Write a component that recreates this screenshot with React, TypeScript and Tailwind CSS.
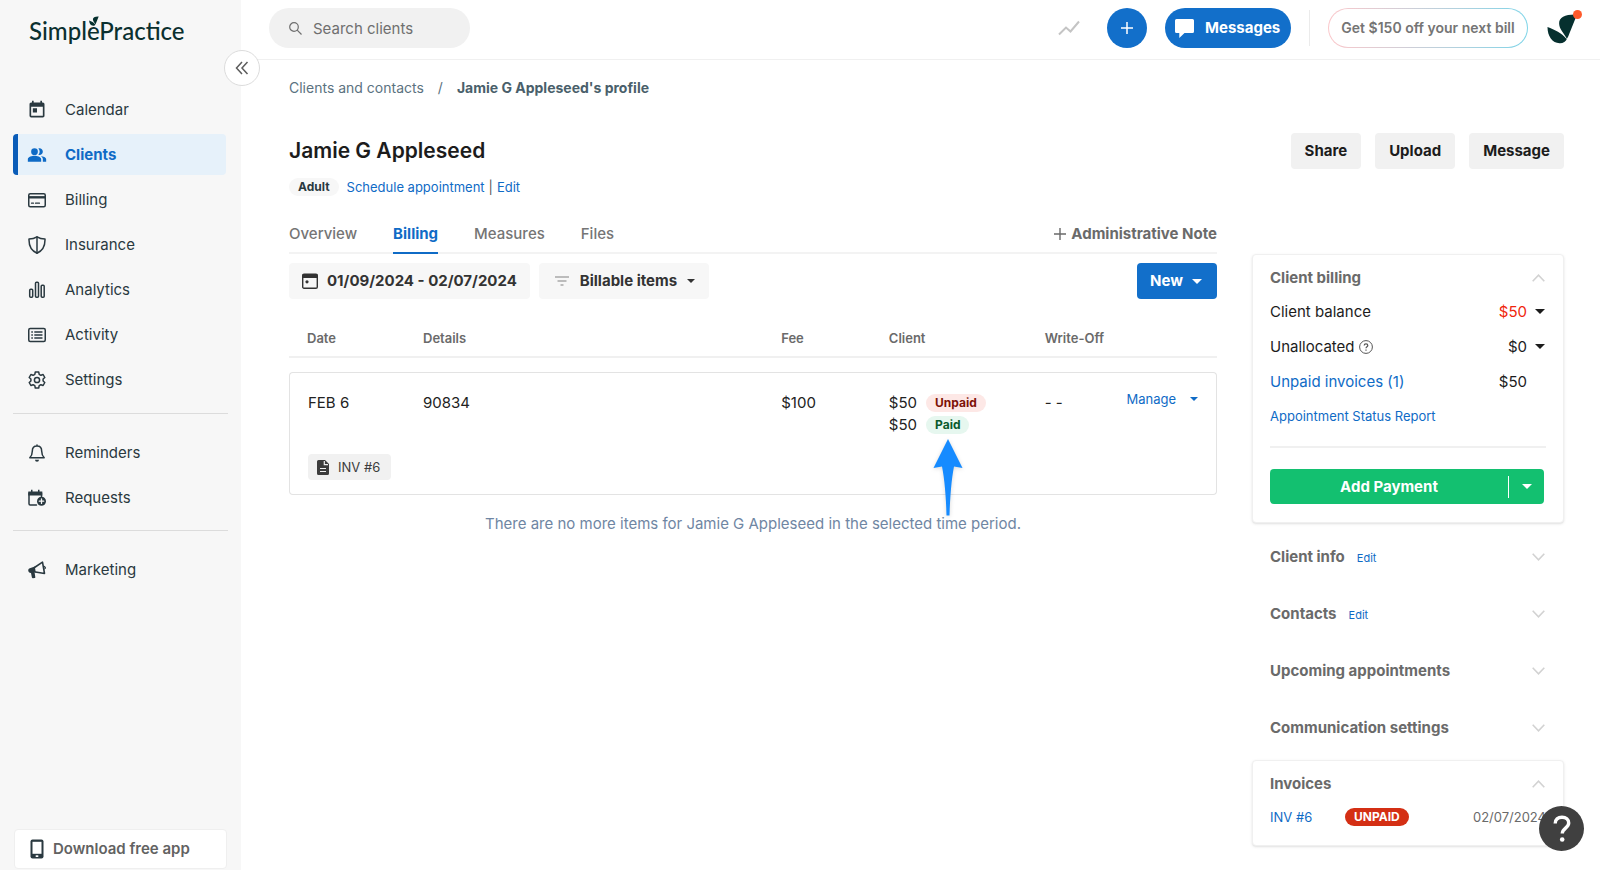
import type { ReactNode } from 'react';
import { useState } from 'react';
import { MdPeopleAlt, MdToday } from 'react-icons/md';

type NavItem = { label: string; icon: ReactNode };

function Glyph({ children }: { children: ReactNode }) {
  return (
    <svg viewBox="0 0 18 18" className="size-[18px]" fill="none" stroke="currentColor" strokeWidth="1.5" strokeLinejoin="round" strokeLinecap="round" aria-hidden="true">
      {children}
    </svg>
  );
}

const mainNav: NavItem[] = [
  { label: 'Calendar', icon: <MdToday className="size-5" /> },
  { label: 'Clients', icon: <MdPeopleAlt className="size-5" /> },
  {
    label: 'Billing',
    icon: (
      <Glyph>
        <rect x="0.75" y="2.75" width="16.5" height="13" rx="1.5" />
        <path d="M1 6.3h16" strokeWidth="2.4" strokeLinecap="butt" />
        <path d="M3.5 12.2h2M7.5 12.2h4" strokeWidth="1.2" />
      </Glyph>
    ),
  },
  {
    label: 'Insurance',
    icon: (
      <Glyph>
        <path d="M9 .8c2.3 1.5 5 2.2 8 2.2.2 6.5-1.6 11.500-8 14.200C2.600 14.500.8 9.500 1 3c3 0 5.700-.7 8-2.200z" />
        <path d="M9 1v16" />
      </Glyph>
    ),
  },
  {
    label: 'Analytics',
    icon: (
      <Glyph>
        <rect x="1.7" y="8.2" width="3" height="8" rx="1" />
        <rect x="7.5" y="1.2" width="3" height="15" rx="1" />
        <rect x="13.2" y="4.2" width="3" height="12" rx="1" />
      </Glyph>
    ),
  },
  {
    label: 'Activity',
    icon: (
      <Glyph>
        <rect x="0.75" y="2.5" width="16.5" height="13" rx="1.5" />
        <path d="M6.8 6h7.2M6.8 9h7.2M6.8 12h7.2M3.8 6h.6M3.8 9h.6M3.8 12h.6" strokeWidth="1.4" />
      </Glyph>
    ),
  },
  {
    label: 'Settings',
    icon: (
      <Glyph>
        <path d="M7.3 1h3.4l.5 2.300 1.700 1 2.200-.8 1.700 3-1.700 1.500v2l1.700 1.500-1.700 3-2.200-.8-1.700 1-.5 2.300H7.300l-.5-2.300-1.700-1-2.200.8-1.700-3L2.900 10V8L1.200 6.500l1.700-3 2.200.8 1.700-1z" />
        <circle cx="9" cy="9" r="2.6" />
      </Glyph>
    ),
  },
];

const requestNav: NavItem[] = [
  {
    label: 'Reminders',
    icon: (
      <Glyph>
        <path d="M9 2c-3 0-4.700 2.300-4.700 5.200 0 3.200-.8 4.800-2.500 6.500h14.400c-1.700-1.700-2.500-3.300-2.500-6.500C13.700 4.300 12 2 9 2zM9 1v1" />
        <path d="M7 15.700h4a2 2 0 0 1-4 0z" fill="currentColor" stroke="none" />
      </Glyph>
    ),
  },
  {
    label: 'Requests',
    icon: (
      <Glyph>
        <path d="M8.5 16H2.200a1.200 1.200 0 0 1-1.200-1.200V4h12.500v3.500" />
        <path d="M.3 2.500h14v4H.3zM3 .8h1.500v2H3zM10 .8h1.500v2H10z" fill="currentColor" stroke="none" />
        <circle cx="13.5" cy="12.2" r="4.5" fill="currentColor" stroke="none" />
        <path d="M13.500 10v4.400M11.300 12.200h4.400" stroke="#f7f7f7" strokeWidth="1.3" />
      </Glyph>
    ),
  },
];

const growthNav: NavItem[] = [
  {
    label: 'Marketing',
    icon: (
      <Glyph>
        <path d="M6.500 6.500 14.500 1.200 16.500 12.500 7.500 11" strokeWidth="1.6" />
        <path d="M6.800 5.500 1.800 7.200C.3 7.800 0 9 .4 10.200c.4 1.300 1.400 1.800 2.600 1.700l.9 4.600c.1.500.5.8 1 .8l1.700-.3c.6-.1.8-.6.7-1.100l-.7-4.400 1.200-.1z" fill="currentColor" stroke="none" />
        <path d="M16.300 5.200c1.500.2 1.700 2.200.4 3" fill="currentColor" strokeWidth="1" />
      </Glyph>
    ),
  },
];

function NavList({ items, active }: { items: NavItem[]; active?: string }) {
  return (
    <ul className="flex flex-col gap-1">
      {items.map((item) => {
        const isActive = item.label === active;
        return (
          <li key={item.label}>
            <a
              href="#"
              className={
                isActive
                  ? 'flex h-[41px] items-center rounded-sm border-l-[5px] border-[#0a5cb8] bg-[#e6f1fa] pl-[9px] font-bold text-[#0f6bc6]'
                  : 'flex h-[41px] items-center border-l-[5px] border-transparent pl-[9px] text-[#2a3940]'
              }
            >
              <span className="flex w-5 justify-center">{item.icon}</span>
              <span className="pl-[18px]">{item.label}</span>
            </a>
          </li>
        );
      })}
    </ul>
  );
}

function Caret({ className }: { className: string }) {
  return (
    <svg viewBox="0 0 10 5" className={className} fill="currentColor" aria-hidden="true">
      <path d="M0 0h10L5 5z" />
    </svg>
  );
}

function Chevron({ open }: { open?: boolean }) {
  return (
    <svg viewBox="0 0 13 8" className="h-2 w-[13px] text-[#d2d2d2]" fill="none" stroke="currentColor" strokeWidth="1.6" aria-hidden="true">
      <path d={open ? 'M.7 7.200 6.500 1.200 12.300 7.200' : 'M.7.8 6.500 6.800 12.300.8'} />
    </svg>
  );
}

function Leaf({ className }: { className: string }) {
  return (
    <svg viewBox="0 0 32 32" className={className} fill="#06302f" aria-hidden="true">
      <path d="M20.500 26.500C17 20 12.500 16.500 12.500 10.500 12.500 4.500 19 1 31 1.500L23 21.500C22 24 21.500 25.500 20.500 26.500z" />
      <path d="M.5 14.500C8 17.500 15.500 21 19.500 26c.5.7 1 .7 1.300 0C19.500 29.500 16.500 31.500 13 31.300 5.500 31 .5 24 .5 14.500z" />
    </svg>
  );
}

function Sidebar() {
  return (
    <aside className="relative flex w-[241px] shrink-0 flex-col bg-[#f7f7f7]">
      <a href="#" className="relative ml-[29px] mt-[13px] w-fit font-['Lato'] text-[24px] font-medium leading-9 text-[#0b302f]" aria-label="SimplePractice home">
        SimplePractice
        <Leaf className="absolute left-[60px] top-[3px] size-[10px]" />
      </a>
      <button
        type="button"
        aria-label="Collapse menu"
        className="absolute -right-[19px] top-[50px] z-10 flex size-9 items-center justify-center rounded-full border border-[#dcdcdc] bg-white text-[#5c5c5c]"
      >
        <svg viewBox="0 0 14 14" className="size-[14px]" fill="none" stroke="currentColor" strokeWidth="1.5" aria-hidden="true">
          <path d="M7 1 1.500 7 7 13M12.500 1 7 7 12.500 13" />
        </svg>
      </button>

      <nav className="mt-10 pl-[13px] pr-[15px]">
        <NavList items={mainNav} active="Clients" />
        <hr className="-mr-0.5 mb-[18px] mt-[13px] border-[#dcdcdc]" />
        <NavList items={requestNav} />
        <hr className="-mr-0.5 mb-[18px] mt-3 border-[#dcdcdc]" />
        <NavList items={growthNav} />
      </nav>

      <a href="#" className="mx-[14px] mb-px mt-auto flex h-[40px] items-center gap-[9px] rounded border border-[#efefef] bg-white pl-[15px] font-semibold text-[#626262]">
        <svg viewBox="0 0 14 20" className="h-5 w-[14px]" aria-hidden="true">
          <rect x="0.5" y="0.5" width="13" height="19" rx="2" fill="#2a3940" />
          <path d="M2.500 2.800h9v12h-9z" fill="#fff" />
          <path d="M5.700 16.300h2.600v1.700H5.700z" fill="#fff" />
        </svg>
        Download free app
      </a>
    </aside>
  );
}

function TopBar() {
  return (
    <header className="flex h-[60px] items-start border-b border-[#f0f0f0] pl-7 pr-[18px] pt-2">
      <label className="flex h-10 w-[201px] items-center gap-[11px] rounded-full bg-[#f1f1f1] pl-5 pr-4">
        <svg viewBox="0 0 13 13" className="size-[13px] shrink-0 text-[#6f6f6f]" fill="none" stroke="currentColor" strokeWidth="1.2" aria-hidden="true">
          <circle cx="5" cy="5" r="4.3" />
          <path d="m8.200 8.200 4.300 4.300" />
        </svg>
        <input
          type="text"
          aria-label="Search clients"
          placeholder="Search clients"
          className="h-10 min-w-0 flex-1 bg-transparent outline-none placeholder:text-[#6f6f6f]"
        />
      </label>

      <div className="ml-auto flex h-10 items-center">
        <svg viewBox="0 0 22 16" className="h-4 w-[22px] text-[#c4c4c4]" fill="none" stroke="currentColor" strokeWidth="2" aria-hidden="true">
          <path d="M1 14.500 8 7.500 12.500 11.500 21 1.500" />
        </svg>
        <button type="button" aria-label="Create" className="ml-[27px] flex size-10 items-center justify-center rounded-full bg-[#126fca] text-white">
          <svg viewBox="0 0 12 12" className="size-3" stroke="currentColor" strokeWidth="1.5" aria-hidden="true">
            <path d="M6 0v12M0 6h12" />
          </svg>
        </button>
        <button type="button" className="ml-[18px] flex h-10 w-[126px] items-center gap-[11px] rounded-full bg-[#126fca] pl-[10px] font-bold text-white">
          <svg viewBox="0 0 19 19" className="size-[19px]" fill="currentColor" aria-hidden="true">
            <path d="M1.500 0h16A1.500 1.500 0 0 1 19 1.500v11a1.500 1.500 0 0 1-1.500 1.500H9.500L4.300 19v-5H1.500A1.500 1.500 0 0 1 0 12.500v-11A1.500 1.500 0 0 1 1.500 0z" />
          </svg>
          Messages
        </button>
        <span className="ml-[18px] h-9 w-px bg-[#ebebeb]" />
        <button type="button" className="ml-[18px] h-10 w-[200px] rounded-full bg-linear-to-r from-[#fbc8cb] to-[#7dd4e8] p-px">
          <span className="flex h-full items-center justify-center rounded-full bg-white text-sm font-semibold text-[#757575]">
            Get $150 off your next bill
          </span>
        </button>
        <button type="button" aria-label="Account" className="relative ml-[19px] flex w-[35px] items-center">
          <Leaf className="size-[31px]" />
          <span className="absolute -top-[3px] right-0 size-[9px] rounded-full bg-[#ff5a2b]" />
        </button>
      </div>
    </header>
  );
}

const tabs = ['Overview', 'Billing', 'Measures', 'Files'];

function BillingTable() {
  return (
    <table className="mt-5 w-full table-fixed border-separate border-spacing-0 text-left text-[#222]">
      <colgroup>
        <col className="w-[12.5%]" />
        <col className="w-[38.6%]" />
        <col className="w-[11.6%]" />
        <col className="w-[16.8%]" />
        <col className="w-[8.5%]" />
        <col />
      </colgroup>
      <thead>
        <tr className="text-[13px] text-[#6a6a6a] [&>th]:h-[39px] [&>th]:border-b-2 [&>th]:border-[#f0f0f0] [&>th]:pl-[18px] [&>th]:font-semibold">
          <th>Date</th>
          <th>Details</th>
          <th>Fee</th>
          <th>Client</th>
          <th className="whitespace-nowrap">Write-Off</th>
          <th aria-label="Actions" />
        </tr>
      </thead>
      <tbody>
        <tr aria-hidden="true">
          <td colSpan={6} className="h-[14px]" />
        </tr>
        <tr className="[&>td]:border-t [&>td]:border-[#e3e3e3] [&>td]:pl-[18px] [&>td]:align-top [&>td:not(:last-child)]:pt-[19px]">
          <td className="rounded-tl border-l">FEB 6</td>
          <td>90834</td>
          <td>$100</td>
          <td className="relative">
            <div className="flex h-[22px] items-center gap-[9px]">
              $50
              <span className="flex h-[18px] items-center rounded-full bg-[#fde8e6] px-[9px] text-xs font-bold text-[#7d1208]">Unpaid</span>
            </div>
            <div className="flex h-[22px] items-center gap-[9px]">
              $50
              <span className="flex h-[18px] items-center rounded-full bg-[#e6f7ef] px-[9px] text-xs font-bold text-[#0a5a2c]">Paid</span>
            </div>
            <svg viewBox="0 0 30 77" className="absolute left-[62px] top-[66px] z-10 h-[77px] w-[30px] drop-shadow-sm" fill="#168bff" aria-hidden="true">
              <path d="M15 0 29.500 29 21 27.500C18.500 40 17 58 16.500 76.500h-3C13 58 11.500 40 9 27.500L.5 29z" />
            </svg>
          </td>
          <td>- -</td>
          <td className="rounded-tr border-r pr-[18px] pt-[15px] text-right">
            <button type="button" className="inline-flex items-center gap-[14px] text-[13px] leading-4 text-[#0f6bc6]">
              Manage
              <Caret className="h-1 w-2" />
            </button>
          </td>
        </tr>
        <tr>
          <td colSpan={6} className="rounded-b border-x border-b border-[#e3e3e3] pb-[14px] pl-[18px] pt-[18px]">
            <a href="#" className="flex h-[26px] w-[83px] items-center gap-[9px] rounded bg-[#f1f1f1] pl-[9px] text-[13px] text-[#3c3c3c]">
              <svg viewBox="0 0 12 15" className="h-[15px] w-3" aria-hidden="true">
                <path d="M1.500 0H8l4 4v9.500a1.500 1.500 0 0 1-1.500 1.500h-9A1.500 1.500 0 0 1 0 13.500v-12A1.500 1.500 0 0 1 1.500 0z" fill="#3c3c3c" />
                <path d="M7.300 1v3.700H11M3 8.500h6M3 11.500h6" stroke="#f1f1f1" strokeWidth="1.2" fill="none" />
              </svg>
              INV #6
            </a>
          </td>
        </tr>
      </tbody>
    </table>
  );
}

function ClientBillingCard() {
  return (
    <section className="rounded border border-[#f0f0f0] bg-white px-[17px] pb-[18px] pt-[11px] shadow-sm">
      <div className="flex h-6 items-center justify-between pr-px">
        <h2 className="font-bold text-[#6a6a6a]">Client billing</h2>
        <button type="button" aria-label="Collapse client billing">
          <Chevron open />
        </button>
      </div>
      <dl className="mt-1 flex flex-col pr-px text-[#1c1c1c]">
        <div className="flex h-[35px] items-center">
          <dt>Client balance</dt>
          <dd className="ml-auto flex items-center gap-2">
            <span className="text-[#f0260c]">$50</span>
            <Caret className="h-[5px] w-[10px]" />
          </dd>
        </div>
        <div className="flex h-[35px] items-center">
          <dt className="flex items-center gap-1">
            Unallocated
            <svg viewBox="0 0 14 14" className="size-[14px]" fill="none" stroke="#555" aria-hidden="true">
              <circle cx="7" cy="7" r="6.4" />
              <path d="M5.200 5.500c0-2.200 3.600-2.200 3.600 0 0 1.300-1.800 1.300-1.800 2.700M7 9.500v1.200" strokeWidth="1.2" />
            </svg>
          </dt>
          <dd className="ml-auto flex items-center gap-2">
            $0
            <Caret className="h-[5px] w-[10px]" />
          </dd>
        </div>
        <div className="flex h-[35px] items-center">
          <dt>
            <a href="#" className="text-[#0f6bc6]">Unpaid invoices (1)</a>
          </dt>
          <dd className="ml-auto mr-[18px]">$50</dd>
        </div>
      </dl>
      <a href="#" className="mt-[7px] block text-[13px] leading-5 text-[#0f6bc6]">Appointment Status Report</a>
      <hr className="mt-5 border-t-2 border-[#f0f0f0]" />
      <div className="mr-0.5 mt-[21px] flex h-[35px] items-center rounded bg-[#13c070] text-white">
        <button type="button" className="h-full flex-1 font-bold">Add Payment</button>
        <span className="h-[22px] w-px bg-white" />
        <button type="button" aria-label="More payment options" className="flex h-full w-[35px] items-center justify-center">
          <Caret className="h-[5px] w-[10px]" />
        </button>
      </div>
    </section>
  );
}

const sections = [
  { title: 'Client info', editable: true },
  { title: 'Contacts', editable: true },
  { title: 'Upcoming appointments', editable: false },
  { title: 'Communication settings', editable: false },
];

function DetailsColumn() {
  return (
    <aside className="mt-[85px] w-[312px] shrink-0">
      <ClientBillingCard />

      <div className="mt-[5px]">
        {sections.map((section) => (
          <div key={section.title} className="flex h-[57px] items-center pl-[18px] pr-[19px]">
            <h2 className="font-bold text-[#6a6a6a]">{section.title}</h2>
            {section.editable && (
              <a href="#" className="ml-3 pt-0.5 text-[11px] text-[#0f6bc6]">Edit</a>
            )}
            <button type="button" aria-label={`Expand ${section.title}`} className="ml-auto">
              <Chevron />
            </button>
          </div>
        ))}
      </div>

      <section className="mt-1 rounded border border-[#f0f0f0] bg-white px-[17px] pb-4 pt-[11px] shadow-sm">
        <div className="flex h-6 items-center justify-between pr-px">
          <h2 className="font-bold text-[#6a6a6a]">Invoices</h2>
          <button type="button" aria-label="Collapse invoices">
            <Chevron open />
          </button>
        </div>
        <div className="mt-[9px] flex h-6 items-center text-[13px]">
          <a href="#" className="w-[75px] text-[#0f6bc6]">INV #6</a>
          <span className="flex h-[18px] items-center rounded-full bg-[#d42f14] px-[9px] text-xs font-bold text-white">UNPAID</span>
          <span className="ml-auto text-[#6a6a6a]">02/07/2024</span>
        </div>
      </section>
    </aside>
  );
}

export default function App() {
  const [tab, setTab] = useState('Billing');

  return (
    <div className="flex min-h-screen bg-white font-['Inter',sans-serif] text-[15px] leading-[22px]">
      <Sidebar />

      <div className="flex min-w-0 flex-1 flex-col">
        <TopBar />

        <main className="px-12 pr-9">
          <nav aria-label="Breadcrumb" className="mt-[17px] flex gap-[14px] text-sm leading-[22px] text-[#5b7280]">
            <a href="#">Clients and contacts</a>
            <span>/</span>
            <span className="font-bold text-[#4a5f6b]">Jamie G Appleseed's profile</span>
          </nav>

          <div className="mt-[34px] flex items-start justify-between">
            <h1 className="text-[21px] font-semibold leading-9 text-[#1c1c1c]">Jamie G Appleseed</h1>
            <div className="flex gap-[14px] font-bold text-[#1c1c1c]">
              <button type="button" className="h-9 rounded bg-[#f1f1f1] px-[14px]">Share</button>
              <button type="button" className="h-9 rounded bg-[#f1f1f1] px-[14px]">Upload</button>
              <button type="button" className="h-9 rounded bg-[#f1f1f1] px-[14px]">Message</button>
            </div>
          </div>

          <div className="flex items-start gap-[35px]">
            <div className="min-w-0 flex-1">
              <div className="mt-[9px] flex h-[18px] items-center text-[13px] text-[#0f6bc6]">
                <span className="mr-2 flex h-[18px] items-center rounded-full bg-[#f7f7f7] px-[9px] text-xs font-bold text-[#2a3940]">Adult</span>
                <a href="#">Schedule appointment</a>
                <span className="px-1 text-[#555]">|</span>
                <a href="#">Edit</a>
              </div>

              <div className="mt-[22px] flex h-9 items-stretch border-b-2 border-[#f3f3f3]">
                <div role="tablist" className="flex gap-9">
                  {tabs.map((name) => (
                    <button
                      key={name}
                      type="button"
                      role="tab"
                      aria-selected={tab === name}
                      onClick={() => setTab(name)}
                      className={
                        tab === name
                          ? '-mb-0.5 border-b-2 border-[#0f6bc6] pb-0.5 font-bold text-[#0f6bc6]'
                          : 'pb-0.5 font-medium text-[#757575]'
                      }
                    >
                      {name}
                    </button>
                  ))}
                </div>
                <button type="button" className="ml-auto flex items-center gap-[5px] pb-0.5 font-bold text-[#6a6a6a]">
                  <svg viewBox="0 0 12 12" className="size-3" stroke="currentColor" strokeWidth="1.4" aria-hidden="true">
                    <path d="M6 0v12M0 6h12" />
                  </svg>
                  Administrative Note
                </button>
              </div>

              <div className="mt-[9px] flex h-9 gap-[9px] font-bold text-[#333]">
                <button type="button" className="flex items-center gap-[9px] rounded bg-[#f7f7f7] px-[13px]">
                  <svg viewBox="0 0 16 16" className="size-4" fill="none" aria-hidden="true">
                    <rect x="0.7" y="1.2" width="14.6" height="14" rx="1.3" stroke="currentColor" strokeWidth="1.4" />
                    <path d="M.7 1h14.600v4H.7z" fill="currentColor" />
                    <circle cx="5" cy="8.8" r="1.6" fill="currentColor" />
                  </svg>
                  01/09/2024 - 02/07/2024
                </button>
                <label className="flex items-center gap-[9px] rounded bg-[#f7f7f7] pl-4 pr-[14px]">
                  <svg viewBox="0 0 14 10" className="mr-0.5 h-[10px] w-[14px]" stroke="#a9a9a9" strokeWidth="1.3" aria-hidden="true">
                    <path d="M0 1h14M2.500 5h9M5.500 9h3" />
                  </svg>
                  <select aria-label="Filter items" className="h-9 appearance-none bg-transparent font-bold outline-none">
                    <option>Billable items</option>
                  </select>
                  <Caret className="h-1 w-2" />
                </label>
                <button type="button" className="ml-auto flex w-20 items-center gap-[9px] rounded bg-[#126fca] pl-[13px] text-white">
                  New
                  <Caret className="h-[5px] w-[10px]" />
                </button>
              </div>

              <BillingTable />
              <p className="mt-[18px] text-center text-[#6f86a3]">
                There are no more items for Jamie G Appleseed in the selected time period.
              </p>
            </div>

            <DetailsColumn />
          </div>
        </main>
      </div>

      <button type="button" aria-label="Help" className="fixed bottom-[19px] right-4 z-20 flex size-[45px] items-center justify-center rounded-full bg-[#404040] text-white">
        <svg viewBox="0 0 18 28" className="h-7 w-[18px]" fill="none" stroke="currentColor" strokeWidth="3.4" aria-hidden="true">
          <path d="M2.200 8.500C2.200 4.500 5 2.200 9 2.200s6.700 2.300 6.700 5.800c0 5-6.400 5.200-6.400 10.500" />
          <circle cx="9.2" cy="24.5" r="2.3" fill="currentColor" stroke="none" />
        </svg>
      </button>
    </div>
  );
}
